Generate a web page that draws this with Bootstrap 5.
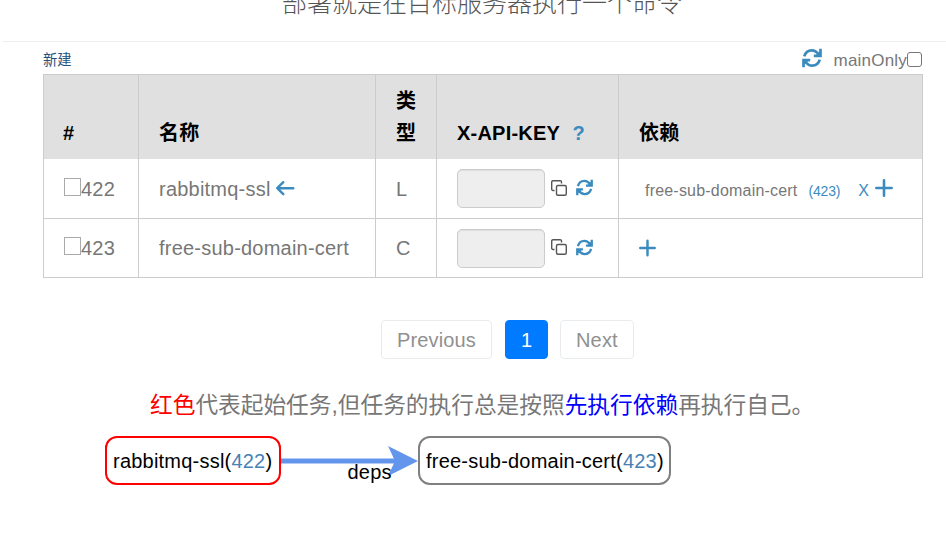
<!DOCTYPE html>
<html lang="zh-CN">
<head>
<meta charset="utf-8">
<meta name="viewport" content="width=device-width, initial-scale=1">
<title>部署</title>
<link href="https://cdn.jsdelivr.net/npm/bootstrap@5.3.0/dist/css/bootstrap.min.css" rel="stylesheet">
<style>
body{font-family:"Liberation Sans","Noto Sans CJK SC",sans-serif;color:#777;font-size:20px;line-height:32px;width:946px;height:548px}
a{color:#3b8bbf;text-decoration:none}
svg{flex:none}
.intro{height:41px;margin-left:3px;padding-left:279px;border-bottom:1px solid #eee;box-sizing:content-box;width:664px}
.intro p{font-size:25px;font-weight:300;line-height:36px;margin-top:-15px;color:#555;white-space:nowrap}
.panel{margin-left:43px;width:880px}
.toolbar{height:32px;font-size:16px}
.newlink{font-size:14.3px;color:#23527c;line-height:20px;padding-top:4px}
.reload{margin:0 12px 0 0}
.mainonly{font-size:17px;letter-spacing:.2px;padding-top:5px}
.boxtop{width:15px;height:15px;border:1px solid #767676;border-radius:3px;margin:2px 1px 0 0}
.tasks{table-layout:fixed;border-collapse:collapse;width:880px;color:#777;letter-spacing:.22px}
.tasks th,.tasks td{border:1px solid #ccc;padding:0 19px 0 20px}
.tasks th{background:#e0e0e0;color:#000;vertical-align:bottom;height:84px;padding-bottom:10px;border-bottom:0}
.tasks th:first-child{padding-left:19px}
.tasks td{height:59px;padding-top:0;vertical-align:middle;border-top-width:0}
.tasks tbody tr:first-child td{height:60px}
.tasks .rowtext{padding-top:2px}
.pick{width:17px;height:18px;border:1px solid #aaa;margin-top:-4px}
.apihelp{margin-left:7px}
.keybox{width:88px;height:39px;background:#eee;border:1px solid #ccc;border-radius:5px;box-shadow:inset 0 1px 1px rgba(0,0,0,.075)}
.copyicon{margin:0 9px 1px 5.5px}
.copyicon.lower{margin-bottom:3px}
.resync{margin-bottom:2px}
.dep{font-size:16px;margin-left:6px;padding-top:5px;letter-spacing:.2px}
.dep small{font-size:14px;margin-left:11px;letter-spacing:-.2px}
.dropdep{margin-left:18px}
.plusafter{margin-left:6px}
.pager{margin:42px 0 0 338px;gap:12px}
.pager .page-link{height:39px;line-height:38px;padding:0 15px;border:1px solid #e9ecef;border-radius:4px;font-size:20px;color:#909090;letter-spacing:.15px}
.pager .page-link.current{background:#007bff;border-color:#007bff;color:#fff;width:43px;margin-left:1px}
.pager .page-link.next{width:74px}
.hint{font-size:22.7px;line-height:36px;margin:28px 0 0 150px;white-space:nowrap;color:#777}
.start-word{color:red}
.order-word{color:blue}
.flow{margin:13px 0 0 105px;color:#000;letter-spacing:.22px}
.task-node{height:49px;border:2px solid gray;border-radius:12px;line-height:47px;padding:0 6px;white-space:nowrap}
.task-node a{color:#4682b4}
.task-node.start{border-color:red;width:176px}
.task-node.target{width:253px}
.edge{width:137px;height:49px}
.edge span{left:66.500px;top:20px}
</style>
<script src="https://cdn.jsdelivr.net/npm/bootstrap@5.3.0/dist/js/bootstrap.bundle.min.js"></script>
</head>
<body class="bg-white overflow-hidden">
<svg class="d-none">
<symbol id="sync" viewBox="0 0 20 20"><g fill="none" stroke="#3b8bbf" stroke-width="2.7"><path d="M2.2 8.4C3.5 4 6.2 2.300 9.800 2.300c3 0 5.200 1.600 7 4.200M18.500 .8v7h-6.700M17.800 11.600c-1.300 4.400-4 6.100-7.600 6.100-3 0-5.200-1.600-7-4.200M1.500 19.200v-7h6.700"/></g><path d="M19 2v6h-6zM1 18v-6h6z" fill="#3b8bbf"/></symbol>
<symbol id="copy" viewBox="0 0 16 16"><g fill="none" stroke="#555" stroke-width="1.400"><rect x="5.500" y="5.500" width="9.800" height="9.800" rx="1.500"/><path d="M3.500 10.500H2A1.300 1.300 0 0 1 .7 9.200V2A1.300 1.300 0 0 1 2 .7h7.200A1.300 1.300 0 0 1 10.500 2v1.500"/></g></symbol>
<symbol id="plus" viewBox="0 0 16 16"><path d="M8 1.200v13.600M1.200 8h13.600" stroke="#3b8bbf" stroke-width="2.300" stroke-linecap="round"/></symbol>
</svg>
<div class="intro overflow-hidden"><p class="mb-0">部署就是在目标服务器执行一个命令</p></div>
<main>
<div class="panel">
<div class="toolbar d-flex align-items-center">
<a class="newlink me-auto" href="#">新建</a>
<a href="#" class="reload d-flex" aria-label="刷新"><svg width="20" height="20"><use href="#sync"/></svg></a>
<span class="mainonly">mainOnly</span><span class="boxtop"></span>
</div>
<table class="tasks">
<colgroup><col style="width:95px"><col style="width:237px"><col style="width:61px"><col style="width:182px"><col></colgroup>
<thead><tr><th>#</th><th>名称</th><th>类型</th><th>X-API-KEY <a href="#" class="apihelp">?</a></th><th>依赖</th></tr></thead>
<tbody>
<tr>
<td class="rowtext"><div class="d-flex align-items-center"><span class="pick"></span>422</div></td>
<td class="rowtext"><div class="d-flex align-items-center">rabbitmq-ssl<a href="#" class="d-flex ms-1"><svg width="21" height="18" viewBox="0 0 21 18" fill="none" stroke="#3b8bbf" stroke-width="2.400" stroke-linecap="round" stroke-linejoin="round"><path d="M18.300 8.200H2.500M8.300 2.200 2.200 8.200l6.100 6"/></svg></a></div></td>
<td class="rowtext">L</td>
<td><div class="d-flex align-items-center"><span class="keybox"></span><svg class="copyicon" width="16" height="16"><use href="#copy"/></svg><svg class="resync" width="17" height="17"><use href="#sync"/></svg></div></td>
<td><div class="d-flex align-items-center"><span class="dep">free-sub-domain-cert<small><a href="#">(423)</a></small><a href="#" class="dropdep">X</a></span><svg class="plusafter" width="18" height="18"><use href="#plus"/></svg></div></td>
</tr>
<tr>
<td><div class="d-flex align-items-center"><span class="pick"></span>423</div></td>
<td>free-sub-domain-cert</td>
<td>C</td>
<td><div class="d-flex align-items-center"><span class="keybox"></span><svg class="copyicon lower" width="16" height="16"><use href="#copy"/></svg><svg class="resync" width="17" height="17"><use href="#sync"/></svg></div></td>
<td><div class="d-flex align-items-center"><svg width="17" height="18"><use href="#plus"/></svg></div></td>
</tr>
</tbody>
</table>
<nav class="pager d-flex"><a class="page-link" href="#">Previous</a><a class="page-link current" href="#">1</a><a class="page-link next" href="#">Next</a></nav>
</div>
<p class="hint mb-0"><span class="start-word">红色</span>代表起始任务,但任务的执行总是按照<span class="order-word">先执行依赖</span>再执行自己。</p>
<div class="flow d-flex">
<div class="task-node start">rabbitmq-ssl(<a href="#">422</a>)</div>
<div class="edge position-relative"><svg class="d-block" width="137" height="49"><path d="M0 25H115" stroke="#6495ed" stroke-width="5"/><path d="M107 10l30 15-30 15 7-15z" fill="#6495ed"/></svg><span class="position-absolute">deps</span></div>
<div class="task-node target">free-sub-domain-cert(<a href="#">423</a>)</div>
</div>
</main>
</body>
</html>
